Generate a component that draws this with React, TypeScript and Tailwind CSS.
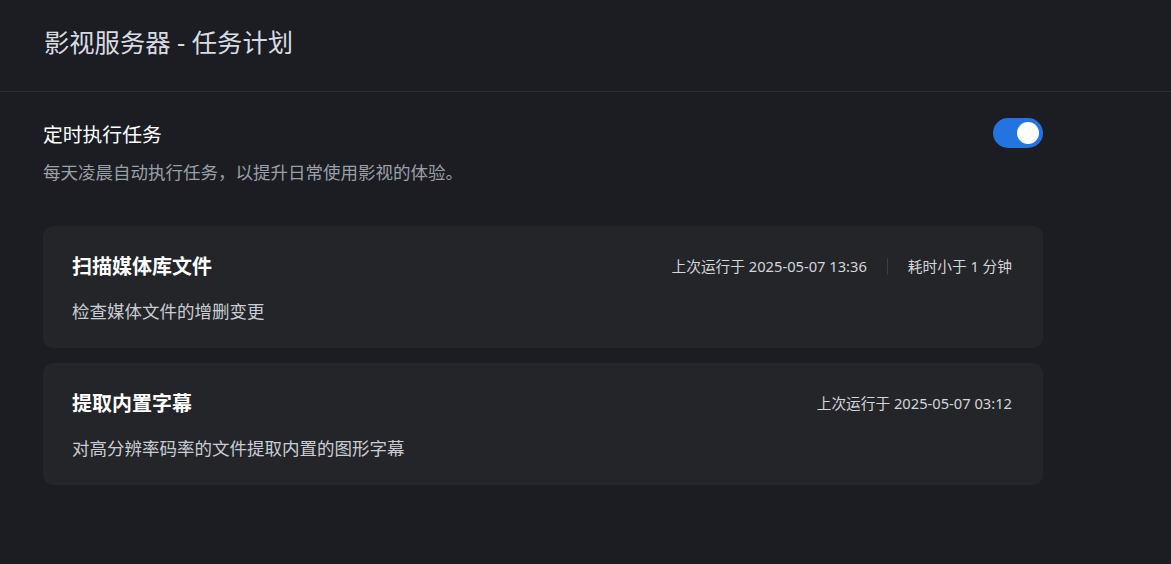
import React from "react";

const font = { fontFamily: '"Noto Sans", "Noto Sans CJK SC", sans-serif' };

function TaskCard({ title, desc, last, duration }: { title: string; desc: string; last: string; duration?: string }) {
  return (
    <div className="rounded-[10px] bg-[#232529] pl-[29px] pr-[31px] pt-[28px] pb-[24px]">
      <div className="flex items-center justify-between h-[26px]">
        <div className="text-[20px] leading-[26px] font-bold text-white">{title}</div>
        <div className="flex items-center text-[14.7px] text-[#d3d6db] -translate-y-[1px]">
          <span>上次运行于 {last}</span>
          {duration && (
            <>
              <span className="mx-[20px] w-px h-[16px] bg-[#3b3e44]" />
              <span>{duration}</span>
            </>
          )}
        </div>
      </div>
      <div className="mt-[18px] text-[17.5px] leading-[26px] text-[#c9cdd3]">{desc}</div>
    </div>
  );
}

export default function App() {
  return (
    <div style={font} className="w-[1171px] h-[564px] bg-[#1b1d22] overflow-hidden">
      <div className="h-[92px] border-b border-[#2c2f34] pl-[44px] pt-[26px]">
        <div className="text-[25.3px] leading-[32px] text-[#d8dce2]">影视服务器 - 任务计划</div>
      </div>
      <div className="w-[1000px] ml-[43px]">
        <div className="flex items-center justify-between mt-[26px]">
          <div className="text-[19.8px] leading-[30px] text-white translate-y-[2px]">定时执行任务</div>
          <div className="w-[50px] h-[30px] rounded-full bg-[#2374e1] flex items-center justify-end pr-[4px]">
            <div className="w-[22px] h-[22px] rounded-full bg-white" />
          </div>
        </div>
        <div className="mt-[11px] text-[17.5px] leading-[26px] text-[#9aa0a8]">每天凌晨自动执行任务，以提升日常使用影视的体验。</div>
        <div className="mt-[41px] flex flex-col gap-[15px]">
          <TaskCard title="扫描媒体库文件" desc="检查媒体文件的增删变更" last="2025-05-07 13:36" duration="耗时小于 1 分钟" />
          <TaskCard title="提取内置字幕" desc="对高分辨率码率的文件提取内置的图形字幕" last="2025-05-07 03:12" />
        </div>
      </div>
    </div>
  );
}
